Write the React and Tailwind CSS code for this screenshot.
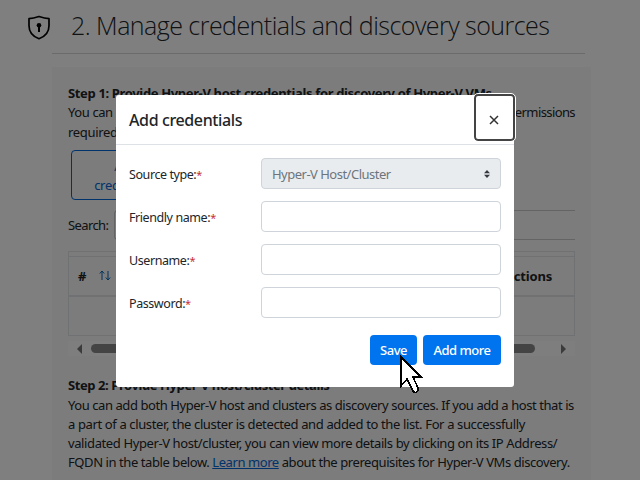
import React from "react";

const steps = [
  { text: "You can add both Hyper-V host and clusters as discovery sources. If you add a host that is", cls: "tracking-[-0.43px]" },
  { text: "a part of a cluster, the cluster is detected and added to the list. For a successfully", cls: "tracking-[-0.37px]" },
  { text: "validated Hyper-V host/cluster, you can view more details by clicking on its IP Address/", cls: "tracking-[-0.39px]" },
];

function Label({ children }) {
  return (
    <label className="flex w-[132px] shrink-0 pt-[2px] text-[12.5px] leading-[19px] tracking-[-0.42px] text-[#212529]">
      {children}
      <span className="text-[11px] text-[#c8313a]">*</span>
    </label>
  );
}

function Field({ label }) {
  return (
    <div className="flex h-[31px] items-center">
      <Label>{label}</Label>
      <input className="h-[31px] w-[240px] rounded-[4px] border border-[#ced4da] bg-white px-2 outline-none" />
    </div>
  );
}

function Page() {
  return (
    <main className="h-[480px] w-[640px] bg-white text-[#212529]">
      <header className="flex h-[54px] pl-[27px]">
        <svg className="mt-[15px] shrink-0" width="24" height="26" viewBox="0 0 24 26" fill="none">
          <path d="M12 1.800C9 2.800 5.500 3.800 2 4V11c0 6.200 4 10.800 10 13C18 21.800 22 17.200 22 11V4C18.500 3.800 15 2.800 12 1.800Z" transform="translate(0 -.3)" stroke="#000" strokeWidth="1.700" strokeLinejoin="round" />
          <circle cx="12" cy="10.300" r="2.300" fill="#000" />
          <path d="M12 11v6" stroke="#000" strokeWidth="2" />
        </svg>
        <div className="ml-[1px] w-[533px] border-b border-[#d5d7da] pl-[19px]">
          <h1 className="whitespace-nowrap font-['Open_Sans'] text-[25px] font-light leading-[51px] tracking-[-0.54px]">2. Manage credentials and discovery sources</h1>
        </div>
      </header>
      <section className="ml-[52px] mt-[13px] h-[413px] w-[539px] bg-[#f8f8f8] px-[16px] pt-[17px] text-[13px] leading-[19px]">
        <h2 className="whitespace-nowrap font-bold tracking-[-0.35px]">Step 1: Provide Hyper-V host credentials for discovery of Hyper-V VMs</h2>
        <div className="flex justify-between tracking-[-0.4px]"><span>You can</span><span className="tracking-[-0.6px]">permissions</span></div>
        <p className="mt-[1px] tracking-[-0.31px]">required</p>
        <button className="ml-[3px] mt-[8px] block h-[50px] w-[110px] rounded-[4px] border border-[#0067d8] px-4 pt-[2px] leading-[19px] tracking-[-0.3px] text-[#0067d8]">Add credentials</button>
        <div className="mt-[10px] flex h-[30px] items-center">
          <span className="w-[46px] shrink-0 tracking-[-0.6px]">Search:</span>
          <div className="h-[30px] flex-1 rounded-l-[4px] border border-r-0 border-[#c4c8cc]" />
        </div>
        <div className="mt-[11px] h-[85px] border border-[#dee2e6] pt-[4px]">
          <div className="flex h-[41px] items-center border-b-2 border-t border-[#dee2e6] pl-[9px] font-bold">
            <span>#</span>
            <svg className="ml-[13px]" width="12" height="12" viewBox="0 0 12 12" fill="none" stroke="#0067b8">
              <path d="M3 10V1M.8 3.500 3 1l2.200 2.500M9 1v9M6.800 7.500 9 10l2.200-2.500" />
            </svg>
            <span className="ml-auto mr-[22px] tracking-[-0.2px]">Actions</span>
          </div>
        </div>
        <div className="mt-[5px] flex h-[15px] items-center justify-between bg-[#fcfcfc] px-[9px]">
          <div className="border-y-[5px] border-r-[5px] border-y-transparent border-r-[#777]" />
          <div className="mr-[17px] h-[9px] w-[444px] rounded-full bg-[#888]" />
          <div className="border-y-[5px] border-l-[5px] border-y-transparent border-l-[#777]" />
        </div>
        <h2 className="mb-px mt-[20px] font-bold tracking-[-0.42px]">Step 2: Provide Hyper-V host/cluster details</h2>
        {steps.map((s) => <p key={s.text} className={"whitespace-nowrap " + s.cls}>{s.text}</p>)}
        <p className="whitespace-nowrap tracking-[-0.42px]">FQDN in the table below. <a className="text-[#0067d8] underline">Learn more</a> about the prerequisites for Hyper-V VMs discovery.</p>
      </section>
    </main>
  );
}

function Dialog() {
  return (
    <div className="absolute left-[116px] top-[95px] flex h-[292px] w-[398px] flex-col rounded-[3px] bg-white">
      <header className="flex h-[50px] shrink-0 items-start justify-between border-b border-[#dee2e6] pl-[13px]">
        <h2 className="text-[16px] font-medium leading-[51px] tracking-[-0.38px] text-[#212529]">Add credentials</h2>
        <button className="-mr-px -mt-px flex h-[47px] w-[41px] items-center justify-center rounded-[4px] border-2 border-[#444] bg-white pr-px pt-[4px] outline outline-1 outline-white">
          <svg width="10" height="10" viewBox="0 0 10 10" stroke="#333" strokeWidth="1.500"><path d="M1 1l8 8M9 1 1 9" /></svg>
        </button>
      </header>
      <form className="flex flex-col gap-[12px] px-[13px] pt-[13px]">
        <div className="flex h-[31px] items-center">
          <Label>Source type:</Label>
          <div className="flex h-[31px] w-[240px] items-center justify-between rounded-[4px] border border-[#ced4da] bg-[#e9ecef] pl-[10px] pr-[10px] pt-[2px] text-[13px] tracking-[-0.51px] text-[#6c757d]">
            Hyper-V Host/Cluster
            <svg className="mb-px" width="6" height="8" viewBox="0 0 6 8" fill="#343a40"><path d="M3 0 6 3.300H0ZM3 8 0 4.700h6Z" /></svg>
          </div>
        </div>
        <Field label="Friendly name:" />
        <Field label="Username:" />
        <Field label="Password:" />
      </form>
      <footer className="mt-[17px] flex justify-end gap-[6px] pr-[13px] text-[13px] font-medium tracking-[-0.5px] text-white">
        <button className="h-[30px] w-[47px] rounded-[4px] bg-[#0073ee] pt-[2px]">Save</button>
        <button className="h-[30px] w-[78px] rounded-[4px] bg-[#0073ee] pt-[2px]">Add more</button>
      </footer>
    </div>
  );
}

export default function App() {
  return (
    <div className="relative h-[480px] w-[640px] overflow-hidden font-['Noto_Sans',sans-serif]">
      <Page />
      <div className="absolute inset-0 bg-black/50" />
      <Dialog />
      <svg className="absolute left-[400px] top-[355px]" width="23" height="40" viewBox="0 0 23 40" fill="#fff" stroke="#000" strokeWidth="1.600" shapeRendering="crispEdges">
        <path d="M1 2v29l6-7 6 12c2 3 6 1 5-3l-5-11h8Z" />
      </svg>
    </div>
  );
}
